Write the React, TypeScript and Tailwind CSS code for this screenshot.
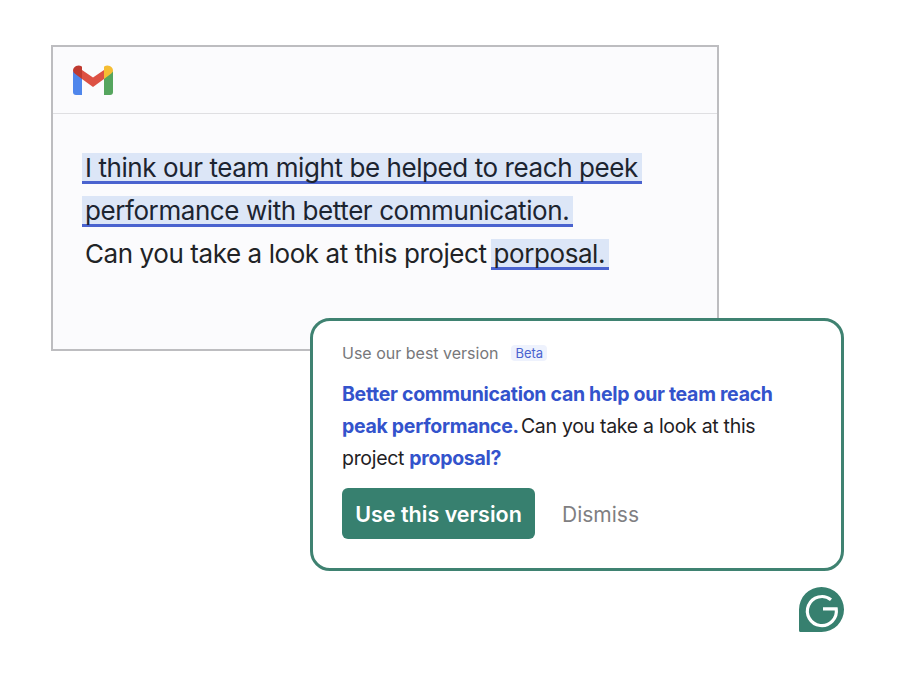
const Gmail = () => (
  <svg width="40" height="30" viewBox="0 0 40 30" fill="none" className="block">
    <path d="M0 6 9 13V30H3A3 3 0 0 1 0 27z" fill="#4f86ec" />
    <path d="M40 6 31 13V30H37A3 3 0 0 0 40 27z" fill="#55a55e" />
    <path d="M9 5 20 12.500 31 5V14L20 22 9 14z" fill="#dd5144" />
    <path d="M0 6A5.500 5.500 0 0 1 8.800 1.600L9 1.800V14L2 8.800A5 5 0 0 1 0 6z" fill="#bf3a30" />
    <path d="M40 6A5.500 5.500 0 0 0 31.200 1.600L31 1.800V14L38 8.800A5 5 0 0 0 40 6z" fill="#f5bd33" />
  </svg>
);

const GrammarlyLogo = () => (
  <svg width="45" height="45" viewBox="0 0 45 45" className="block">
    <path d="M22.500 0a22.500 22.500 0 0 1 0 45H1.500A1.500 1.500 0 0 1 0 43.500V22.500A22.500 22.500 0 0 1 22.500 0z" fill="#37806f" />
    <path d="M32 12.800A14.500 14.500 0 1 0 37.200 21.800H24" fill="none" stroke="#fff" strokeWidth="3.200" />
  </svg>
);

const Flagged = ({ children, className = "" }: { children: React.ReactNode; className?: string }) => (
  <span className={`block w-fit h-[31px] pl-[3px] pr-[4px] leading-[29px] bg-[#dce6f7] border-b-[3px] border-[#4a63cf] ${className}`}>
    {children}
  </span>
);

const App = () => {
  return (
    <div className="w-[900px] h-[689px] bg-white overflow-hidden pt-[45px] pl-[51px] font-['Inter',sans-serif]">
      {/* Email window */}
      <div className="w-[668px] h-[306px] border-2 border-[#bdbdc0] bg-[#fbfbfd]">
        <div className="h-[67px] border-b border-[#dfdfe2] pl-[20px] pt-[18px]">
          <Gmail />
        </div>
        <div className="pl-[29px] pt-[39px] text-[26px] tracking-[-0.42px] text-[#1c2430]">
          <Flagged>I think our team might be helped to reach peek</Flagged>
          <Flagged className="mt-[12px]">performance with better communication.</Flagged>
          <div className="flex mt-[12px] h-[31px] leading-[29px] pl-[3px] text-[#212326]">
            <span className="whitespace-pre">Can you take a look at this project </span>
            <Flagged className="-ml-[3px]">porposal.</Flagged>
          </div>
        </div>
      </div>

      {/* Suggestion card */}
      <div className="relative ml-[259px] -mt-[33px] w-[534px] h-[253px] rounded-[20px] border-[3px] border-[#3f8271] bg-white pl-[29px] pt-[21px]">
        <div className="flex items-center h-[22px]">
          <span className="text-[16px] text-[#77777a]">Use our best version</span>
          <span className="ml-[13px] px-[4px] h-[16px] leading-[16px] rounded-[4px] bg-[#eef2fd] text-[13px] text-[#4a63cf]">Beta</span>
        </div>
        <p className="mt-[14px] w-[460px] text-[19.500px] leading-[32px] tracking-[-0.3px] text-[#1f2124]">
          <b className="font-bold text-[#3353cc]">Better communication can help our team reach peak performance.</b> <span className="-ml-[3px]">Can you take a look at this project</span> <b className="font-bold text-[#3353cc]">proposal?</b>
        </p>
        <div className="flex items-center mt-[14px]">
          <button className="w-[193px] h-[51px] pt-[2px] rounded-[6px] bg-[#37806f] text-[21.500px] font-semibold text-white">
            Use this version
          </button>
          <span className="ml-[27px] pt-[2px] text-[21px] text-[#7f7f82]">Dismiss</span>
        </div>
      </div>

      <div className="ml-[748px] mt-[16px] w-fit">
        <GrammarlyLogo />
      </div>
    </div>
  );
};

export default App;
